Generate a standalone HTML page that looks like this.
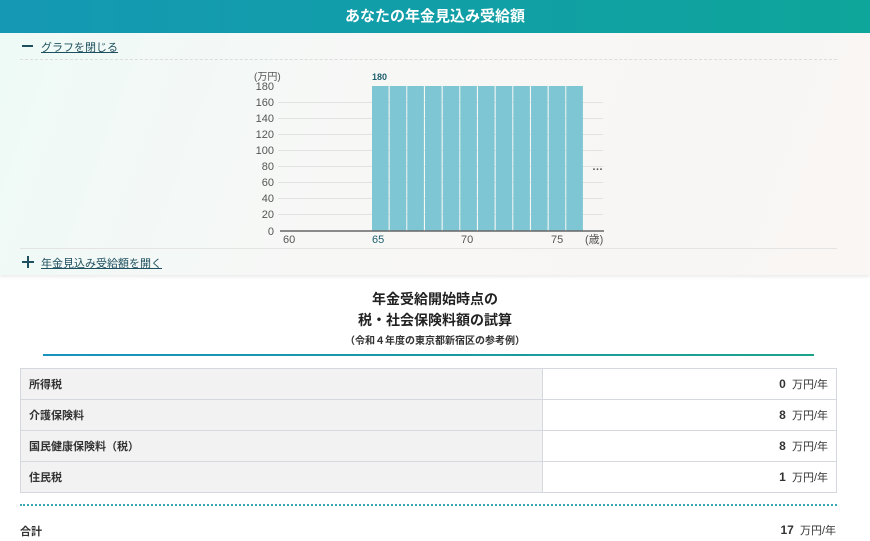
<!DOCTYPE html>
<html><head><meta charset="utf-8"><style>
*{margin:0;padding:0;box-sizing:border-box}
body{width:870px;height:541px;overflow:hidden;background:#fff;font-family:"Liberation Sans","Noto Sans CJK JP",sans-serif;color:#333;position:relative}
.hdr{position:absolute;left:0;top:0;width:870px;height:33px;background:linear-gradient(90deg,#1598b4,#0ea59a);color:#fff;font-size:15px;font-weight:bold;text-align:center;line-height:33px}
.panel{position:absolute;left:0;top:33px;width:870px;height:242px;background:linear-gradient(110deg,#eefaf6 0%,#f7f7f6 40%,#f9f6f4 100%);box-shadow:0 2px 3px rgba(0,0,0,.08)}
.lnk{position:absolute;font-size:11px;color:#1e4f5e;text-decoration:underline}
.ab{position:absolute}
.title{position:absolute;left:0;width:870px;text-align:center;font-weight:bold;color:#222}
table{position:absolute;left:20px;top:368px;width:817px;border-collapse:collapse;font-size:11px}
td{border:1px solid #d5d8de;height:31px;padding:0 8px}
td.l{background:#f2f2f2;width:522px;font-weight:bold}
td.r{text-align:right;background:#fff}
b{font-weight:bold;font-size:12px}
</style></head><body>
<div class="hdr">あなたの年金見込み受給額</div>
<div class="panel"></div>
<div class="ab" style="left:22px;top:45px;width:11px;height:2px;background:#1e4f5e"></div>
<div class="lnk" style="left:41px;top:39px">グラフを閉じる</div>
<div class="ab" style="left:20px;top:59px;width:817px;border-top:1px dashed #ddd"></div>
<svg class="ab" style="left:0;top:0" width="870" height="275">
<g stroke="#e2e2e2" stroke-width="1">
<line x1="278" x2="603" y1="102.5" y2="102.5"/><line x1="278" x2="603" y1="118.5" y2="118.5"/><line x1="278" x2="603" y1="134.5" y2="134.5"/><line x1="278" x2="603" y1="150.5" y2="150.5"/><line x1="278" x2="603" y1="166.5" y2="166.5"/><line x1="278" x2="603" y1="182.5" y2="182.5"/><line x1="278" x2="603" y1="198.5" y2="198.5"/><line x1="278" x2="603" y1="214.5" y2="214.5"/>
</g>
<g fill="#7ec6d3">
<rect x="372" y="86" width="16.6" height="145"/><rect x="389.7" y="86" width="16.6" height="145"/><rect x="407.3" y="86" width="16.6" height="145"/><rect x="425" y="86" width="16.6" height="145"/><rect x="442.7" y="86" width="16.6" height="145"/><rect x="460.3" y="86" width="16.6" height="145"/><rect x="478" y="86" width="16.6" height="145"/><rect x="495.7" y="86" width="16.6" height="145"/><rect x="513.3" y="86" width="16.6" height="145"/><rect x="531" y="86" width="16.6" height="145"/><rect x="548.7" y="86" width="16.6" height="145"/><rect x="566.3" y="86" width="16.6" height="145"/>
</g>
<line x1="280" x2="604" y1="231" y2="231" stroke="#666" stroke-width="1.5"/>
<g font-size="11" fill="#555" text-anchor="end" font-family="Liberation Sans,sans-serif">
<text x="274" y="90">180</text><text x="274" y="106">160</text><text x="274" y="122">140</text><text x="274" y="138">120</text><text x="274" y="154">100</text><text x="274" y="170">80</text><text x="274" y="186">60</text><text x="274" y="202">40</text><text x="274" y="218">20</text><text x="274" y="235">0</text>
</g>
<text x="254" y="80" font-size="10" fill="#555" font-family="Liberation Sans,Noto Sans CJK JP,sans-serif">(万円)</text>
<text x="372" y="80" font-size="9" fill="#1e5f6e" font-weight="bold" font-family="Liberation Sans,sans-serif">180</text>
<text x="592" y="170" font-size="11" fill="#555" font-weight="bold">…</text>
<g font-size="11" fill="#555" font-family="Liberation Sans,Noto Sans CJK JP,sans-serif">
<text x="283" y="243">60</text><text x="372" y="243" fill="#1e5f6e">65</text><text x="461" y="243">70</text><text x="551" y="243">75</text><text x="585" y="243">(歳)</text>
</g>
</svg>
<div class="ab" style="left:20px;top:248px;width:817px;border-top:1px solid #e4e4e4"></div>
<div class="ab" style="left:22px;top:261px;width:12px;height:2px;background:#1e4f5e"></div>
<div class="ab" style="left:27px;top:256px;width:2px;height:12px;background:#1e4f5e"></div>
<div class="lnk" style="left:41px;top:255px">年金見込み受給額を開く</div>
<div class="title" style="top:289px;font-size:14px">年金受給開始時点の</div>
<div class="title" style="top:310px;font-size:14px">税・社会保険料額の試算</div>
<div class="title" style="top:332px;font-size:10px;color:#333">（令和４年度の東京都新宿区の参考例）</div>
<div class="ab" style="left:43px;top:354px;width:771px;height:2px;background:linear-gradient(90deg,#1a92c0,#1aa38a)"></div>
<table>
<tr><td class="l">所得税</td><td class="r"><b>0</b>&nbsp; 万円/年</td></tr>
<tr><td class="l">介護保険料</td><td class="r"><b>8</b>&nbsp; 万円/年</td></tr>
<tr><td class="l">国民健康保険料（税）</td><td class="r"><b>8</b>&nbsp; 万円/年</td></tr>
<tr><td class="l">住民税</td><td class="r"><b>1</b>&nbsp; 万円/年</td></tr>
</table>
<div class="ab" style="left:20px;top:504px;width:817px;border-top:2px dotted #3aa7b5"></div>
<div class="ab" style="left:20px;top:523px;font-size:11px;font-weight:bold">合計</div>
<div class="ab" style="right:34px;top:522px;font-size:11px"><b>17</b>&nbsp; 万円/年</div>
</body></html>
